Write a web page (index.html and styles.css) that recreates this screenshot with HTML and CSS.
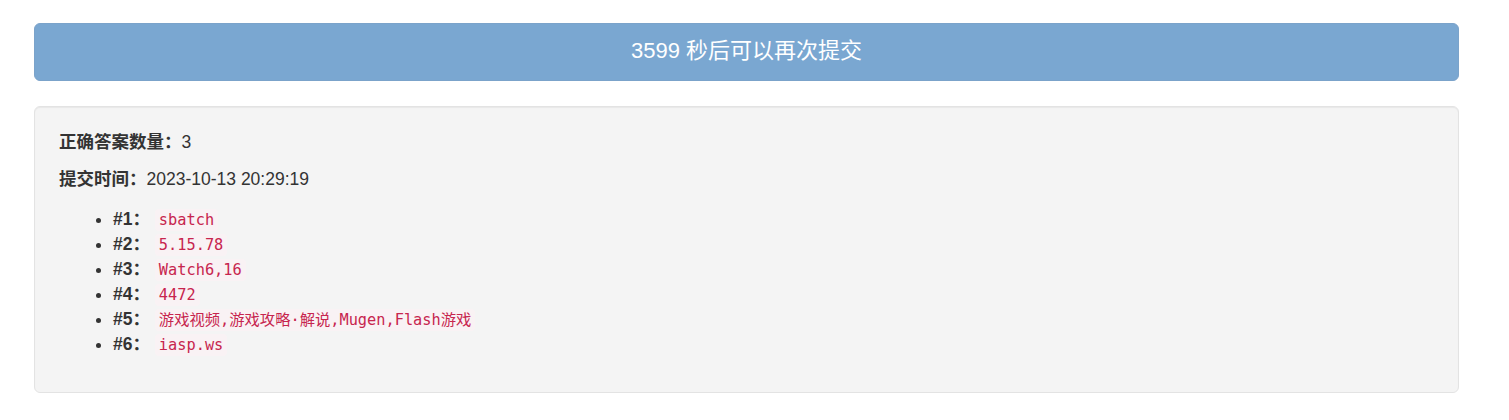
FILE: index.html
```html
<!DOCTYPE html>
<html lang="zh-CN">
<head>
<meta charset="utf-8">
<title>提交结果</title>
<link rel="stylesheet" href="styles.css">
</head>
<body>
<div class="page">
  <button class="submit-btn" disabled>3599 秒后可以再次提交</button>
  <div class="well">
    <p class="line"><strong>正确答案数量：</strong>3</p>
    <p class="line"><strong>提交时间：</strong>2023-10-13 20:29:19</p>
    <ul class="answers">
      <li><strong>#1：</strong> <code>sbatch</code></li>
      <li><strong>#2：</strong> <code>5.15.78</code></li>
      <li><strong>#3：</strong> <code>Watch6,16</code></li>
      <li><strong>#4：</strong> <code>4472</code></li>
      <li><strong>#5：</strong> <code>游戏视频,游戏攻略·解说,Mugen,Flash游戏</code></li>
      <li><strong>#6：</strong> <code>iasp.ws</code></li>
    </ul>
  </div>
</div>
</body>
</html>
```
FILE: styles.css
```css
html, body {
  margin: 0;
  padding: 0;
  background: #fff;
}
body {
  font-family: "Liberation Sans", Arial, "Noto Sans CJK SC", sans-serif;
  color: #333;
  font-size: 17.5px;
}
.page {
  padding: 23px 0 0 34px;
  width: 1425px;
}
.submit-btn {
  display: block;
  width: 100%;
  height: 58px;
  border: 1px solid #7ba3ca;
  border-radius: 6px;
  background: #7aa7d1;
  color: #fff;
  font-family: "Liberation Sans", Arial, "Noto Sans CJK SC", sans-serif;
  font-size: 22px;
  padding: 0 0 8px;
  cursor: not-allowed;
}
.well {
  margin-top: 25px;
  box-sizing: border-box;
  height: 287px;
  border: 1px solid #e3e3e3;
  border-radius: 6px;
  background: #f4f4f4;
  box-shadow: inset 0 1px 1px rgba(0,0,0,.05);
  padding: 23px 24px;
}
.line {
  margin: 0 0 12px;
  line-height: 25px;
}
.line strong {
  font-weight: bold;
}
.answers {
  margin: 15px 0 0;
  padding-left: 54px;
  line-height: 25px;
}
.answers li {
  height: 25px;
}
.answers li strong {
  font-weight: bold;
}
code {
  font-family: "DejaVu Sans Mono", "Liberation Mono", "Noto Sans CJK SC", monospace;
  font-size: 15.3px;
  line-height: 1;
  color: #c7254e;
  background: #f9f2f4;
  padding: 2px 4px;
  border-radius: 4px;
}
```
